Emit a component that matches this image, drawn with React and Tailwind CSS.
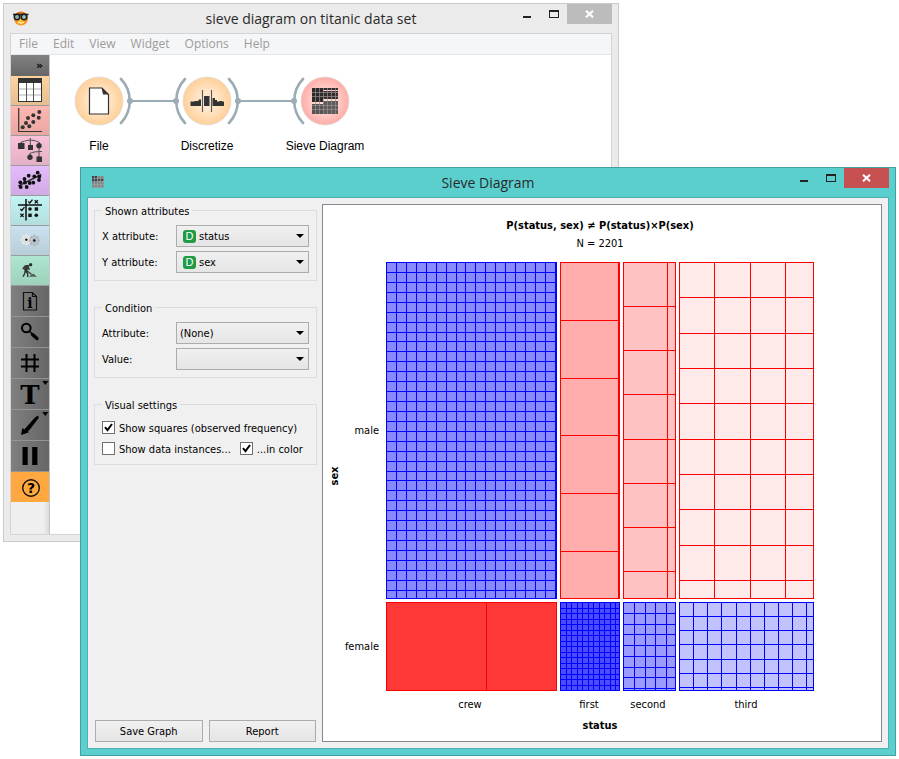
import React from "react";

const uiFont = "font-['DejaVu_Sans_Condensed','DejaVu_Sans',sans-serif]";

/* ---------- title bars ---------- */

function CaptionButtons({ closeClass }) {
  return (
    <div className="flex items-start justify-end">
      <button type="button" aria-label="Minimize" className="flex h-5 w-[27px] items-start justify-center pt-3">
        <span className="h-0.5 w-2 bg-[#222]" />
      </button>
      <button type="button" aria-label="Maximize" className="flex h-5 w-[27px] items-start justify-center pt-1.5">
        <span className="h-2 w-2.5 border border-t-2 border-[#222]" />
      </button>
      <button type="button" aria-label="Close" className={`flex h-5 w-[45px] items-center justify-center ${closeClass}`}>
        <svg width="9" height="8" viewBox="0 0 9 8" stroke="#fff" strokeWidth="2" fill="none">
          <path d="M1 .7 8 7.3M8 .7 1 7.3" />
        </svg>
      </button>
    </div>
  );
}

function TitleBar({ icon, title, iconPad, closeClass }) {
  return (
    <header className="grid h-[29px] shrink-0 grid-cols-[1fr_auto_1fr] items-start px-1.5">
      <div className={iconPad}>{icon}</div>
      <h1 className="pt-1 font-['Open_Sans','Noto_Sans',sans-serif] text-[14px] leading-[22px] text-[#2a2a2a]">{title}</h1>
      <CaptionButtons closeClass={closeClass} />
    </header>
  );
}

function OrangeFace() {
  return (
    <svg width="16" height="15" viewBox="0 0 16 15">
      <defs>
        <radialGradient id="face" cx=".5" cy=".6" r=".6">
          <stop offset="0" stopColor="#ffc23c" />
          <stop offset=".6" stopColor="#f99a1c" />
          <stop offset="1" stopColor="#dd6410" />
        </radialGradient>
      </defs>
      <circle cx="8" cy="7.5" r="7" fill="url(#face)" />
      <path d="M0 3.5h15.5" stroke="#222" strokeWidth="1.6" />
      <circle cx="4" cy="6" r="2.7" fill="#8fb2b4" stroke="#1c1c1c" strokeWidth="1.5" />
      <circle cx="11" cy="6" r="2.7" fill="#8fc4cc" stroke="#1c1c1c" strokeWidth="1.5" />
      <path d="M5 11q3 2 6 0" stroke="#fff0b0" strokeWidth="1.4" fill="none" />
    </svg>
  );
}

function MiniSieve() {
  return (
    <svg width="12" height="12" viewBox="0 0 12 12">
      <rect width="12" height="12" fill="#7b8a8a" />
      <rect width="5" height="6" fill="#3a4646" />
      <rect x="6" y="2" width="6" height="3" fill="#4c4a4a" />
      <path d="M2.5 0v12M5.5 0v12M8.5 0v12M11.5 0v12M0 2.5h12M0 5.5h12M0 8.5h12M0 11.5h12" stroke="#a5a5a5" strokeWidth=".6" />
    </svg>
  );
}

/* ---------- toolbar icons ---------- */

const ink = "#333";

function Dots({ points, r }) {
  return points.map(([x, y]) => <circle key={`${x}-${y}`} cx={x} cy={y} r={r} fill={ink} />);
}

const tableIcon = (
  <>
    <rect x="7.5" y="2.5" width="23" height="23" fill="#fff" stroke={ink} />
    <path d="M8 13h22M8 19h22" stroke="#ccc" strokeWidth="1.6" />
    <path d="M15.5 7v18M22.5 7v18" stroke="#555" />
    <rect x="7" y="2" width="24" height="5" fill={ink} />
  </>
);

const scatterIcon = (
  <>
    <path d="M7.7 2v23.5H31" fill="none" stroke={ink} strokeWidth="1.2" />
    <Dots r={2} points={[[11.7, 21.3], [15, 17], [18.3, 20.3], [17, 12], [22.3, 16], [22.3, 9.3], [27.7, 11.7], [28.3, 6]]} />
  </>
);

const treeIcon = (
  <>
    <path d="M10 10V6.5Q12 5 19.3 4 27 5 28.3 6.5V10M19.3 2v9M28 11v10M19 21v-3.5Q21 16 28 15.5h3" fill="none" stroke="#555" strokeWidth="1.1" />
    <rect x="7" y="7" width="6.5" height="6" fill={ink} />
    <rect x="17" y="9" width="5" height="5" fill={ink} />
    <circle cx="28" cy="9.7" r="2.7" fill={ink} />
    <circle cx="19" cy="21.3" r="2.7" fill={ink} />
    <rect x="25.5" y="20.5" width="5.5" height="5.5" fill={ink} />
  </>
);

const regressionIcon = (
  <>
    <path d="M7.3 20 30.3 8.5" stroke={ink} strokeWidth="1.6" />
    <g fill="#111">
      {[[9.3, 16.3], [13.5, 13], [14, 16.5], [9.7, 21], [15.7, 21], [17.7, 9.7], [23.3, 10.3], [26.7, 6.7], [28.3, 10.7], [22.3, 16.7], [18.7, 17], [28, 14]].map(([x, y]) => (
        <circle key={`${x}-${y}`} cx={x} cy={y} r="1.9" />
      ))}
    </g>
  </>
);

const evaluateIcon = (
  <g stroke="#111" fill="none" strokeWidth="1.3">
    <path d="M15 3v21.5M7 9h24" strokeWidth="1.5" />
    <path d="m17.3 5.500 1.500 1.500 2.700-3.300M9.300 13l1.500 1.500 2.700-3.300" />
    <path d="m23.700 4.200 3.200 3.200m0-3.200-3.200 3.200M9.400 17.700l3.200 3.200m0-3.200-3.200 3.200" />
    <circle cx="19" cy="13" r="1.8" fill="#111" stroke="none" />
    <circle cx="25.3" cy="19.3" r="1.8" fill="#111" stroke="none" />
    <rect x="23.7" y="11.3" width="3.4" height="3.4" fill="#111" stroke="none" />
    <rect x="17.3" y="17.6" width="3.4" height="3.4" fill="#111" stroke="none" />
  </g>
);

function Petals({ cx, cy, r, fill }) {
  return [0, 45, 90, 135, 180, 225, 270, 315].map((a) => (
    <circle
      key={a}
      cx={cx + r * Math.cos((a * Math.PI) / 180)}
      cy={cy + r * Math.sin((a * Math.PI) / 180)}
      r="1.5"
      fill={fill}
    />
  ));
}

const clusterIcon = (
  <>
    <Petals cx={15.3} cy={13.7} r={4.2} fill="#e9e7e2" />
    <Petals cx={23.3} cy={14.5} r={4.2} fill="#b4b6b9" />
    <circle cx="15.3" cy="13.7" r="2.2" fill="#eeeeea" />
    <circle cx="23.3" cy="14.5" r="2.2" fill="#9fb0be" />
    <path d="M14 13.7h2.6M15.3 12.4v2.6M22 14.5h2.6M23.3 13.2v2.6" stroke="#222" strokeWidth="1.3" />
  </>
);

const diggerIcon = (
  <>
    <circle cx="19.6" cy="8.8" r="1.7" fill={ink} />
    <path d="M12.3 12.5 14 10.300l3.500-.6" fill="none" stroke={ink} strokeWidth="1.6" strokeLinecap="round" />
    <path d="M16 10.500 14.700 15" fill="none" stroke={ink} strokeWidth="2.800" strokeLinecap="round" />
    <path d="M14.300 15.500 13.500 18l-1.500 2.700M15 15.500l1.700 2V21M17.300 11l.9 3" fill="none" stroke={ink} strokeWidth="1.400" />
    <path d="M12.500 12.300 20.500 18.200" stroke={ink} strokeWidth="1.100" />
    <path d="M18 20.800 20.500 18.300l2-.5 3.500 3z" fill="#4f6459" />
  </>
);

const infoIcon = (
  <>
    <path d="M12.500 6.500h9l4 4v13.500h-13zM21.500 6.500v4h4" fill="none" stroke="#111" strokeWidth="1.200" />
    <text x="19" y="22" textAnchor="middle" className="font-['DejaVu_Serif',serif] text-[14px] font-bold">i</text>
  </>
);

const zoomIcon = (
  <>
    <circle cx="15.3" cy="11" r="4.300" fill="none" stroke="#000" strokeWidth="2.100" />
    <path d="m18.500 14.500 3 2.500" stroke="#000" strokeWidth="1.500" />
    <path d="m21.500 17.500 4.500 4" stroke="#000" strokeWidth="3.400" strokeLinecap="round" />
  </>
);

const gridIcon = <path d="M15.500 6v18M23.500 6v18M10 11.500h18M10 18.500h18" stroke="#000" strokeWidth="2" />;

const corner = <path d="M31.300 2h6l-3 4z" fill="#000" />;

const textIcon = (
  <>
    <text x="19" y="25" textAnchor="middle" className="font-['DejaVu_Serif',serif] text-[26px] font-bold">T</text>
    {corner}
  </>
);

const arrowIcon = (
  <>
    <path d="m10 25 1.300-7 2 1.500L24 7.500l3-2 .8 2.300-9.500 12.500-1.500.500 1.200 1.500z" fill="#000" />
    {corner}
  </>
);

const pauseIcon = <path d="M11.500 6h5.200v18h-5.200zM21.200 6h5.200v18h-5.200z" fill="#000" />;

const helpIcon = (
  <>
    <circle cx="20" cy="16" r="8.300" fill="none" stroke="#111" strokeWidth="1.400" />
    <text x="20" y="21" textAnchor="middle" className="font-['DejaVu_Sans',sans-serif] text-[14px] font-bold">?</text>
  </>
);

const categories = [
  ["Data", "from-[#ffd39f] to-[#e6be90]", tableIcon],
  ["Visualize", "from-[#ffb7b1] to-[#e9a7a2]", scatterIcon],
  ["Classify", "from-[#fac1d9] to-[#e4b0c6]", treeIcon],
  ["Regression", "from-[#e5bbfb] to-[#d0aae6]", regressionIcon],
  ["Evaluate", "from-[#c3f3f3] to-[#b2dede]", evaluateIcon],
  ["Unsupervised", "from-[#cae1ef] to-[#b8cdda]", clusterIcon],
  ["Prototypes", "from-[#aee6cf] to-[#9dd1bb]", diggerIcon],
];

const tools = [
  ["Info", infoIcon],
  ["Zoom", zoomIcon],
  ["Align to grid", gridIcon],
  ["Text annotation", textIcon],
  ["Arrow annotation", arrowIcon],
  ["Pause", pauseIcon],
];

function ToolBar() {
  return (
    <nav aria-label="Toolbox" className="flex w-[39px] shrink-0 flex-col border-r border-[#c4c4c4] bg-gradient-to-r from-[#efefef] from-85% to-[#dcdcdc]">
      <button type="button" aria-label="Expand" className="flex h-[21px] items-center justify-end bg-gradient-to-b from-[#828282] to-[#666] pr-1.5 font-['DejaVu_Sans',sans-serif] text-[11px] leading-3 font-bold text-black">
        »
      </button>
      {categories.map(([name, tint, icon]) => (
        <button key={name} type="button" aria-label={name} className={`h-[30px] border-b border-[#9b9b9b] bg-gradient-to-b ${tint}`}>
          <svg width="38" height="29">{icon}</svg>
        </button>
      ))}
      {tools.map(([name, icon]) => (
        <button key={name} type="button" aria-label={name} className="h-[31px] border-b border-[#949494] bg-gradient-to-r from-[#808080] to-[#666]">
          <svg width="38" height="30">{icon}</svg>
        </button>
      ))}
      <button type="button" aria-label="Help" className="h-[30px] bg-[#ffa840]">
        <svg width="38" height="30">{helpIcon}</svg>
      </button>
    </nav>
  );
}

/* ---------- workflow canvas ---------- */

function Workflow() {
  return (
    <svg className="h-full min-w-0 flex-1 bg-white" role="img" aria-label="Workflow">
      <defs>
        <radialGradient id="peach">
          <stop offset="0" stopColor="#ffefdc" />
          <stop offset=".5" stopColor="#ffe3c2" />
          <stop offset="1" stopColor="#ffcf98" />
        </radialGradient>
        <radialGradient id="rose">
          <stop offset="0" stopColor="#ffe4e2" />
          <stop offset=".5" stopColor="#ffd0cc" />
          <stop offset="1" stopColor="#ffaca6" />
        </radialGradient>
      </defs>
      <g stroke="#9cacb4" strokeWidth="2" fill="none">
        <path d="M80 46h46M188 46h56" />
        <path
          strokeWidth="2.6"
          strokeLinecap="round"
          d="M71 24a32 32 0 0 1 0 44M135 24a32 32 0 0 0 0 44M179 24a32 32 0 0 1 0 44M253 24a32 32 0 0 0 0 44"
        />
      </g>
      <g fill="#9cacb4">
        <circle cx="80" cy="46" r="3" />
        <circle cx="126" cy="46" r="3" />
        <circle cx="188" cy="46" r="3" />
        <circle cx="244" cy="46" r="3" />
      </g>
      <g stroke="#dcdcd8" strokeWidth=".8">
        <circle cx="49" cy="46" r="24" fill="url(#peach)" />
        <circle cx="157" cy="46" r="24" fill="url(#peach)" />
        <circle cx="275" cy="46" r="24" fill="url(#rose)" />
      </g>
      <path d="M39.500 33H52l6.500 6.500V59h-19z" fill="#fff" stroke={ink} strokeWidth="1.2" />
      <path d="M51.500 32.500 59 39.500h-6z" fill={ink} />
      <path d="M140.500 51v-4.500h4V46h4v-1.500h2.500v6.500zM154 41h5.500v10H154zM162.500 51v-8h2.500v2h2v1.500h2.500V46h2.500v.500h2V51z" fill={ink} />
      <path d="M152.500 35v22M161.500 35v22" stroke="#555" strokeWidth="1.1" />
      <g>
        <rect x="262" y="33" width="11" height="14" fill="#2c2a2a" />
        <rect x="273" y="36" width="15" height="8" fill="#332e2e" />
        <rect x="273" y="33" width="15" height="2" fill="#332e2e" />
        <rect x="262" y="49" width="11" height="10" fill="#555" />
        <rect x="273" y="46" width="15" height="13" fill="#5c5c5c" />
        <path
          d="M265.500 33v26M269.500 33v26M273.500 33v26M277.500 33v26M281.500 33v26M285.500 33v26M262 37.500h26M262 41.500h26M262 50.500h26M262 54.500h26"
          stroke="#9c8f8e"
          strokeWidth=".7"
        />
      </g>
      <g className="font-['Liberation_Sans',sans-serif] text-[12px]" textAnchor="middle">
        <text x="49" y="95">File</text>
        <text x="157" y="95">Discretize</text>
        <text x="275" y="95">Sieve Diagram</text>
      </g>
    </svg>
  );
}

function MainWindow() {
  return (
    <section className="absolute top-[3px] right-[280px] bottom-[217px] left-[3px] flex flex-col border border-[#cbcbcb] bg-[#ebebeb]">
      <TitleBar icon={<OrangeFace />} iconPad="pt-[7px] pl-[3px]" title="sieve diagram on titanic data set" closeClass="bg-[#bcbcbc]" />
      <div className="mx-1.5 mb-1.5 flex min-h-0 flex-1 flex-col border border-[#d4d4d4] bg-white">
        <nav className="flex h-[21px] shrink-0 gap-[15px] border-b border-[#e6e6e6] bg-[#f5f6f7] pl-2 font-['Open_Sans','Noto_Sans',sans-serif] text-[12px] leading-5 text-[#9c9c9c]">
          {["File", "Edit", "View", "Widget", "Options", "Help"].map((item) => (
            <button key={item} type="button">{item}</button>
          ))}
        </nav>
        <div className="flex min-h-0 flex-1">
          <ToolBar />
          <Workflow />
        </div>
      </div>
    </section>
  );
}

/* ---------- control panel ---------- */

function Group({ title, children }) {
  return (
    <fieldset className="min-w-0 border border-[#dcdcdc] px-[7px]">
      <legend className="h-[13px] px-[3px] leading-[15px]">{title}</legend>
      {children}
    </fieldset>
  );
}

function Combo({ id, label, value, typed }) {
  return (
    <div className="flex h-[22px]">
      <label htmlFor={id} className="flex-1 leading-[24px]">{label}</label>
      <div className="relative w-[133px]">
        <select
          id={id}
          defaultValue={value}
          className={`block h-[22px] w-full appearance-none border border-[#acacac] bg-gradient-to-b from-[#f0f0f0] to-[#e5e5e5] pt-px leading-5 ${typed ? "pl-[22px]" : "pl-[3px]"}`}
        >
          <option>{value}</option>
        </select>
        {typed && (
          <span className="pointer-events-none absolute top-[5px] left-[7px] flex h-[13px] w-[13px] items-center justify-center rounded-[3px] bg-[#1f9a45] font-['Liberation_Sans',sans-serif] text-[11px] leading-[13px] text-white">
            D
          </span>
        )}
        <svg className="pointer-events-none absolute top-[9px] right-[5px]" width="8" height="4" viewBox="0 0 8 4">
          <path d="M0 0h8L4 4z" fill="#000" />
        </svg>
      </div>
    </div>
  );
}

function Check({ children, checked }) {
  return (
    <label className="flex h-[13px] gap-1 leading-[15px] whitespace-nowrap">
      <span className="relative h-[13px] w-[13px]">
        <input type="checkbox" defaultChecked={checked} className="peer block h-[13px] w-[13px] appearance-none border border-[#707070] bg-white" />
        <svg className="pointer-events-none absolute inset-0 hidden peer-checked:block" width="13" height="13" viewBox="0 0 13 13">
          <path d="m3 6.200 2.500 3L10 3" fill="none" stroke="#000" strokeWidth="2" />
        </svg>
      </span>
      {children}
    </label>
  );
}

function Controls() {
  const button = "h-[22px] flex-1 border border-[#acacac] bg-gradient-to-b from-[#f0f0f0] to-[#e5e5e5] pt-px leading-5";
  return (
    <div className="flex w-[223px] shrink-0 flex-col gap-5">
      <Group title="Shown attributes">
        <div className="flex flex-col gap-1 pt-2 pb-[7px]">
          <Combo id="x-attribute" label="X attribute:" value="status" typed />
          <Combo id="y-attribute" label="Y attribute:" value="sex" typed />
        </div>
      </Group>
      <Group title="Condition">
        <div className="flex flex-col gap-1 pt-2 pb-[7px]">
          <Combo id="attribute" label="Attribute:" value="(None)" />
          <Combo id="value" label="Value:" value="" />
        </div>
      </Group>
      <Group title="Visual settings">
        <div className="flex flex-col gap-2 pt-2.5 pb-[9px]">
          <Check checked>Show squares (observed frequency)</Check>
          <div className="flex gap-[9px]">
            <Check>Show data instances...</Check>
            <Check checked>...in color</Check>
          </div>
        </div>
      </Group>
      <div className="mx-px mt-auto flex gap-1.5">
        <button type="button" className={button}>Save Graph</button>
        <button type="button" className={button}>Report</button>
      </div>
    </div>
  );
}

/* ---------- sieve diagram ---------- */

const BLUE = "#0000ff";
const RED = "#ff0000";

/* step is the side of one square: the denser the grid, the more cases were observed */
const cells = [
  { x: 63, y: 57, w: 170, h: 336, step: 9.93, fill: "#8888ff", line: BLUE },
  { x: 237, y: 57, w: 59, h: 336, step: 57.8, fill: "#ffadad", line: RED },
  { x: 300, y: 57, w: 52, h: 336, step: 44.15, fill: "#ffc2c2", line: RED },
  { x: 356, y: 57, w: 134, h: 336, step: 35.35, fill: "#ffeaea", line: RED },
  { x: 63, y: 397, w: 170, h: 88, step: 100, fill: "#ff3838", line: RED },
  { x: 237, y: 397, w: 59, h: 88, step: 5.52, fill: "#4b4bff", line: BLUE },
  { x: 300, y: 397, w: 52, h: 88, step: 10.75, fill: "#9a9aff", line: BLUE },
  { x: 356, y: 397, w: 134, h: 88, step: 14.15, fill: "#c2c2ff", line: BLUE },
];

function gridPath({ x, y, w, h, step }) {
  let d = "";
  for (let i = 1; i * step < w; i++) d += `M${x + Math.round(i * step) + 0.5} ${y}v${h}`;
  for (let i = 1; i * step < h; i++) d += `M${x} ${y + Math.round(i * step) + 0.5}h${w}`;
  return d;
}

function SieveChart() {
  return (
    <figure className="min-w-0 flex-1 border border-[#828790] bg-white">
      <svg className="block h-full w-full" role="img" aria-label="Sieve diagram of status and sex">
        {cells.map((c) => (
          <g key={`${c.x}-${c.y}`} stroke={c.line} fill={c.fill}>
            <rect x={c.x + 0.5} y={c.y + 0.5} width={c.w} height={c.h} />
            <path d={gridPath(c)} />
          </g>
        ))}
        <g textAnchor="middle">
          <text x="277" y="24" className="font-bold">P(status, sex) ≠ P(status)×P(sex)</text>
          <text x="277" y="42">N = 2201</text>
          <text x="147" y="503">crew</text>
          <text x="266" y="503">first</text>
          <text x="325" y="503">second</text>
          <text x="423" y="503">third</text>
          <text x="277" y="524" className="font-bold">status</text>
          <text transform="translate(15 271) rotate(-90)" className="font-bold">sex</text>
        </g>
        <g textAnchor="end">
          <text x="56" y="229">male</text>
          <text x="56" y="445">female</text>
        </g>
      </svg>
    </figure>
  );
}

function SieveWindow() {
  return (
    <section className={`absolute top-[167px] right-[3px] bottom-[3px] left-[80px] flex flex-col border border-[#43a09f] bg-[#5bcfce] text-[11px] text-black ${uiFont}`}>
      <TitleBar icon={<MiniSieve />} iconPad="pt-2 pl-[5px]" title="Sieve Diagram" closeClass="bg-[#c75050]" />
      <div className="mx-1.5 mb-1.5 flex min-h-0 flex-1 gap-[5px] border border-[#4cb0af] bg-[#f0f0f0] p-1.5">
        <Controls />
        <SieveChart />
      </div>
    </section>
  );
}

export default function App() {
  return (
    <main className="relative h-screen overflow-hidden bg-white">
      <MainWindow />
      <SieveWindow />
    </main>
  );
}
